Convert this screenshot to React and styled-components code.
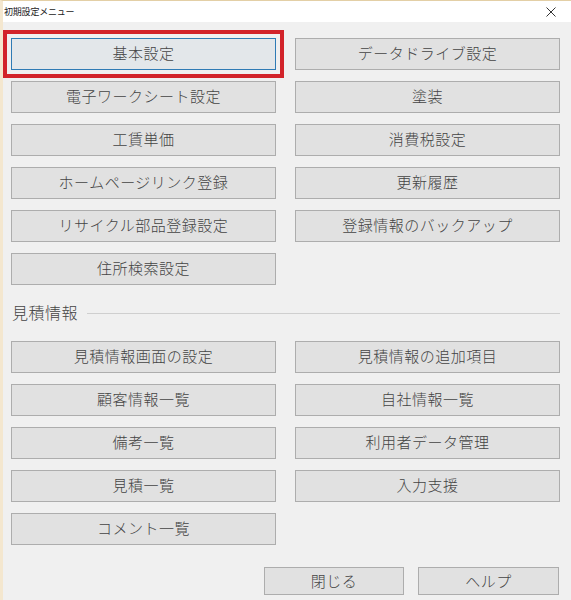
import React from "react";
import styled, { createGlobalStyle } from "styled-components";

const Global = createGlobalStyle`
  html, body { margin: 0; padding: 0; background: #f0f0f0; }
  body { font-family: "Noto Sans CJK JP", "Noto Sans", sans-serif; }
`;

const Window = styled.div`
  width: 571px;
  height: 600px;
  box-sizing: border-box;
  background: #f0f0f0;
  border-top: 1px solid #e3cfa6;
  border-left: 3px solid #f4e7cf;
  display: flex;
  flex-direction: column;
  overflow: hidden;
`;

const TitleBar = styled.div`
  height: 21px;
  background: #ffffff;
  display: flex;
  align-items: center;
  justify-content: space-between;
  margin-left: -3px;
  padding: 0 15px 0 4px;
  flex-shrink: 0;
`;

const Title = styled.span`
  font-size: 9px;
  color: #222;
  letter-spacing: -0.2px;
`;

const Close = styled.svg`
  width: 10px;
  height: 10px;
`;

const Content = styled.div`
  padding: 16px 11px 0 8px;
  display: flex;
  flex-direction: column;
`;

const Grid = styled.div`
  display: grid;
  grid-template-columns: 265px 265px;
  column-gap: 19px;
  row-gap: 11px;
`;

const Button = styled.button`
  height: ${(p) => (p.$small ? 28 : 32)}px;
  width: ${(p) => (p.$w ? `${p.$w}px` : "auto")};
  box-sizing: border-box;
  margin: 0;
  padding: 0 0 ${(p) => (p.$small ? 2 : 3)}px 0;
  background: ${(p) => (p.$focused ? "#e3e7ea" : "#e1e1e1")};
  border: 1px solid ${(p) => (p.$focused ? "#2f7bb5" : "#adadad")};
  font-family: "Noto Sans CJK JP", "Noto Sans", sans-serif;
  font-size: 15px;
  font-weight: 300;
  letter-spacing: 0.5px;
  color: #444;
  outline: ${(p) => (p.$highlight ? "4px solid #d2232a" : "none")};
  outline-offset: 4px;
  cursor: default;
`;

const SectionHeader = styled.div`
  display: flex;
  align-items: center;
  height: 20px;
  margin: 18px 0 18px 1px;
  gap: 9px;
`;

const SectionLabel = styled.span`
  font-size: 16px;
  font-weight: 300;
  color: #444;
  letter-spacing: 0.5px;
  padding-bottom: 3px;
`;

const Rule = styled.div`
  flex: 1;
  height: 1px;
  background: #cfcfcf;
`;

const Footer = styled.div`
  display: flex;
  justify-content: flex-end;
  gap: 14px;
  margin-top: 22px;
  padding-right: 1px;
`;

const top = [
  ["基本設定", true],
  ["データドライブ設定"],
  ["電子ワークシート設定"],
  ["塗装"],
  ["工賃単価"],
  ["消費税設定"],
  ["ホームページリンク登録"],
  ["更新履歴"],
  ["リサイクル部品登録設定"],
  ["登録情報のバックアップ"],
  ["住所検索設定"],
];

const est = [
  "見積情報画面の設定",
  "見積情報の追加項目",
  "顧客情報一覧",
  "自社情報一覧",
  "備考一覧",
  "利用者データ管理",
  "見積一覧",
  "入力支援",
  "コメント一覧",
];

export default function App() {
  return (
    <>
      <Global />
      <Window>
        <TitleBar>
          <Title>初期設定メニュー</Title>
          <Close viewBox="0 0 10 10">
            <path d="M0.5 0.5 L9.5 9.5 M9.5 0.5 L0.5 9.5" stroke="#333" strokeWidth="1" fill="none" />
          </Close>
        </TitleBar>
        <Content>
          <Grid>
            {top.map(([t, f]) => (
              <Button key={t} $focused={f} $highlight={f}>
                {t}
              </Button>
            ))}
          </Grid>
          <SectionHeader>
            <SectionLabel>見積情報</SectionLabel>
            <Rule />
          </SectionHeader>
          <Grid>
            {est.map((t) => (
              <Button key={t}>{t}</Button>
            ))}
          </Grid>
          <Footer>
            <Button $small $w={140}>閉じる</Button>
            <Button $small $w={141}>ヘルプ</Button>
          </Footer>
        </Content>
      </Window>
    </>
  );
}
